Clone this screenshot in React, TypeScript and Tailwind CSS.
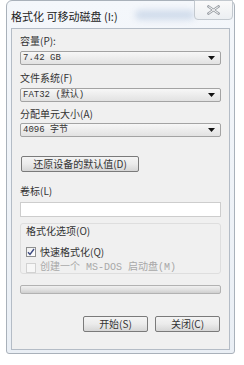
import React from 'react';

const font = { fontFamily: '"Liberation Mono", "Noto Sans CJK SC", monospace' };
const cjk = { fontFamily: '"Noto Sans CJK SC", "Liberation Sans", sans-serif' };

const Combo = ({ value }: { value: string }) => (
  <div className="flex items-center h-[14px] border border-[#a3a3a3] rounded-[2px] bg-gradient-to-b from-[#f7f7f7] to-[#e2e2e2] pl-[2px] pr-[5px]">
    <span className="flex-1 text-[9px] leading-none text-[#333]" style={font}>{value}</span>
    <svg width="7" height="4" viewBox="0 0 7 4"><path d="M0 0h7L3.5 4z" fill="#111" /></svg>
  </div>
);

const Button = ({ label, className }: { label: string; className: string }) => (
  <div
    className={`flex items-center justify-center h-[16px] border border-[#7a7a7a] rounded-[2px] bg-gradient-to-b from-[#f4f4f4] via-[#ebebeb] to-[#d6d6d6] text-[10px] leading-none text-[#333] ${className}`}
    style={cjk}
  >
    {label}
  </div>
);

const Label = ({ text, className }: { text: string; className: string }) => (
  <div className={`h-[12px] text-[10px] leading-[12px] text-[#333] ${className}`} style={cjk}>{text}</div>
);

export default function App() {
  return (
    <div className="w-[244px] h-[365px] bg-white overflow-hidden relative">
      {/* blurred desktop behind glass */}
      <div className="absolute left-[135px] top-[10px] w-[60px] h-[10px] rounded-full bg-[#9fb6d6] opacity-40 blur-[3px]" />
      <div className="ml-[6px] w-[229px] h-[354px] border border-[#a9b1ba] rounded-t-[6px] rounded-b-[3px] bg-gradient-to-b from-[#f4f7fb] to-[#eaeff5] flex flex-col">
        <div className="h-[27px] flex items-start relative">
          <div className="pl-[4px] pt-[9px] text-[11px] leading-[13px] text-[#222]" style={cjk}>格式化 可移动磁盘 (I:)</div>
          <div className="absolute right-[1px] top-[-1px] w-[39px] h-[20px] border border-[#c3c9cf] rounded-b-[4px] bg-gradient-to-b from-[#fafafa] to-[#eceff2] flex items-center justify-center">
            <svg width="13" height="10" viewBox="0 0 13 10">
              <path d="M1.5 1.5l10 7M11.5 1.5l-10 7" stroke="#9a9fa5" strokeWidth="2.6" strokeLinecap="square" />
              <path d="M1.5 1.5l10 7M11.5 1.5l-10 7" stroke="#fafafa" strokeWidth="1" />
            </svg>
          </div>
        </div>
        <div className="mx-[4px] h-[322px] border border-[#b4bcc6] bg-[#f0f0f0] flex flex-col px-[8px]">
          <Label text="容量(P):" className="mt-[6px]" />
          <div className="mt-[4px]"><Combo value="7.42 GB" /></div>
          <Label text="文件系统(F)" className="mt-[7px]" />
          <div className="mt-[4px]"><Combo value="FAT32 (默认)" /></div>
          <Label text="分配单元大小(A)" className="mt-[6px]" />
          <div className="mt-[3px]"><Combo value="4096 字节" /></div>
          <Button label="还原设备的默认值(D)" className="mt-[19px] ml-[1px] w-[118px]" />
          <Label text="卷标(L)" className="mt-[13px]" />
          <div className="mt-[5px] h-[15px] border border-[#cdcdcd] bg-white" />
          <div className="mt-[6px] h-[51px] border border-[#dedede] rounded-[3px] flex flex-col pl-[5px]">
            <Label text="格式化选项(O)" className="mt-[1px]" />
            <div className="mt-[10px] flex items-center gap-[4px] h-[11px]">
              <div className="w-[10px] h-[10px] border border-[#8e8f8f] bg-gradient-to-br from-[#f0f0f0] to-[#ffffff] flex items-center justify-center">
                <svg width="8" height="8" viewBox="0 0 8 8"><path d="M1 4.2l2 2.2L7 1" stroke="#3c4a80" strokeWidth="1.4" fill="none" /></svg>
              </div>
              <span className="text-[10px] leading-none text-[#333]" style={cjk}>快速格式化(Q)</span>
            </div>
            <div className="mt-[5px] flex items-center gap-[4px] h-[11px]">
              <div className="w-[10px] h-[10px] border border-[#d2d2d2] bg-[#f7f7f7]" />
              <span className="text-[10px] leading-none text-[#a8a8a8]" style={font}>创建一个 MS-DOS 启动盘(M)</span>
            </div>
          </div>
          <div className="mt-[11px] h-[9px] border border-[#b2b2b2] rounded-[2px] bg-gradient-to-b from-[#f0f0f0] via-[#e2e2e2] to-[#cfcfcf]" />
          <div className="mt-[22px] flex justify-end gap-[7px] pr-[1px]">
            <Button label="开始(S)" className="w-[65px]" />
            <Button label="关闭(C)" className="w-[65px]" />
          </div>
        </div>
      </div>
    </div>
  );
}
